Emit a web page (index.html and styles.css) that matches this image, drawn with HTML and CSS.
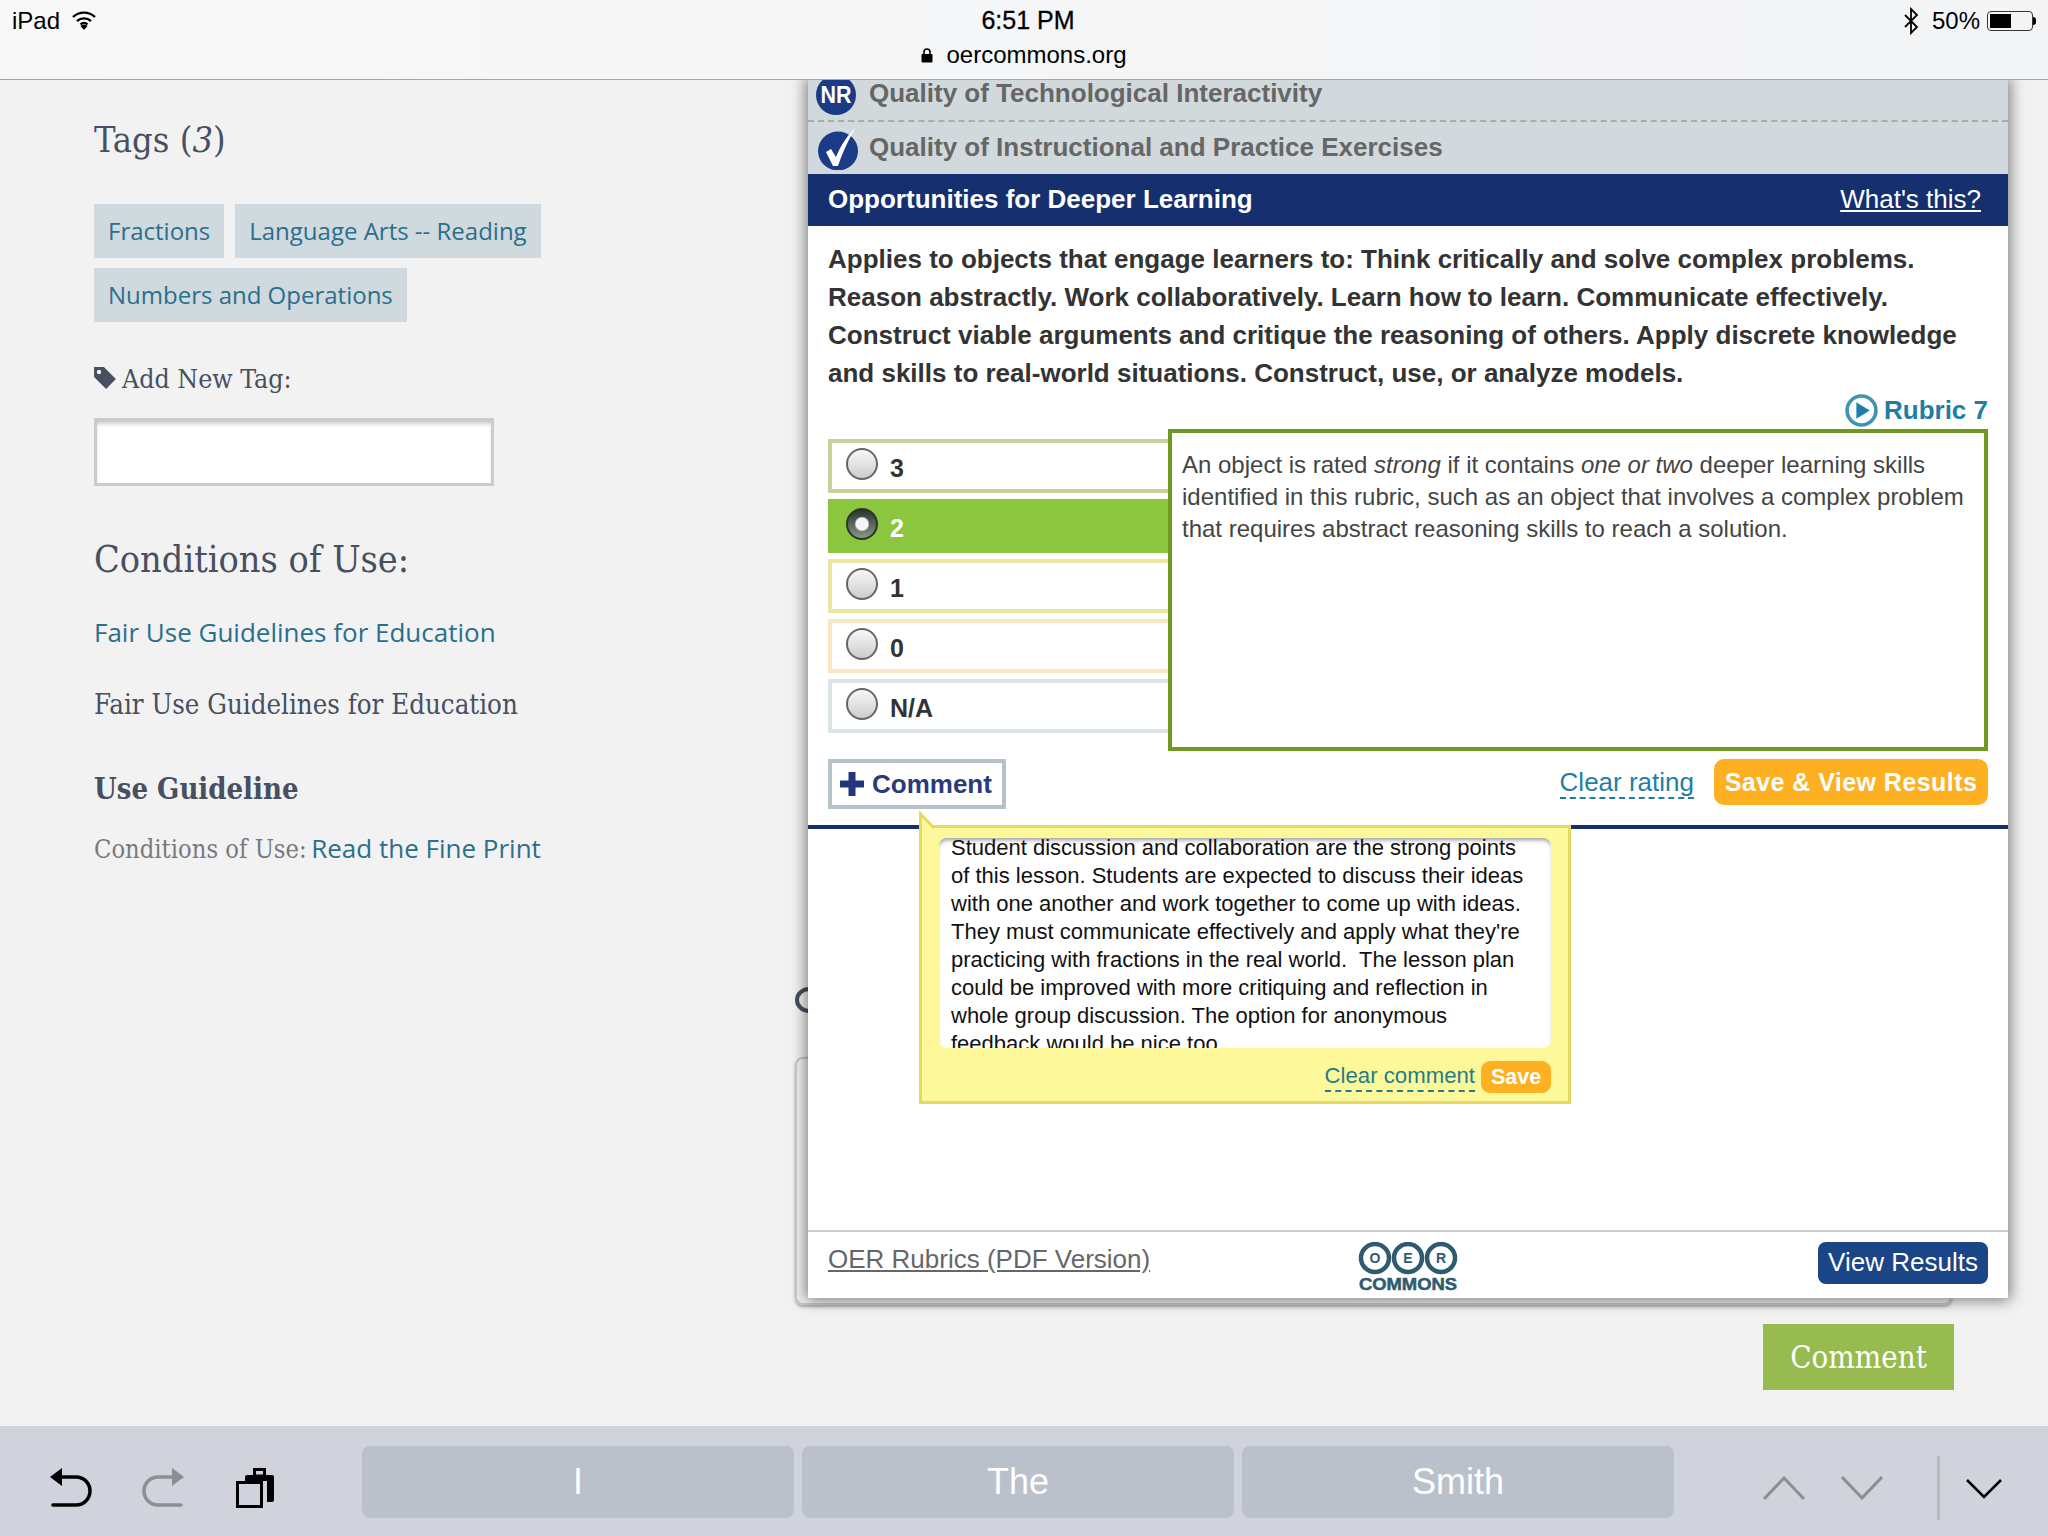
FILE: index.html
```html
<!DOCTYPE html>
<html lang="en">
<head>
<meta charset="utf-8">
<title>OER Commons</title>
<link rel="stylesheet" href="styles.css">
</head>
<body>
<div class="page">
  <header class="topbar">
    <div class="status-left">
      <span>iPad</span>
      <svg class="wifi" viewBox="0 0 24 20"><path d="M1 7a16 16 0 0 1 22 0M5 11a10.500 10.500 0 0 1 14 0M8.500 14.500a5 5 0 0 1 7 0" fill="none" stroke="#000" stroke-width="2.400"/><path d="M12 20l-3.500-4a5 5 0 0 1 7 0z"/></svg>
    </div>
    <div class="status-center">
      <div class="time">6:51 PM</div>
      <div class="url"><svg class="lock" viewBox="0 0 12 16"><path d="M3 7V5a3 3 0 0 1 6 0v2" fill="none" stroke="#000" stroke-width="1.600"/><rect x="0.500" y="7" width="11" height="8.500" rx="1"/></svg>oercommons.org</div>
    </div>
    <div class="status-right">
      <svg class="bt" viewBox="0 0 16 28"><path d="M2 8l12 12-6 6V2l6 6L2 20" fill="none" stroke="#000" stroke-width="1.800"/></svg>
      <span>50%</span>
      <span class="battery"><span class="battery-fill"></span></span>
      <span class="battery-tip"></span>
    </div>
  </header>

  <main class="main">
    <section class="side">
      <h2 class="side-title tags-title">Tags (<em>3</em>)</h2>
      <div class="chips">
        <a class="chip">Fractions</a>
        <a class="chip">Language Arts -- Reading</a>
        <a class="chip">Numbers and Operations</a>
      </div>
      <label class="add-tag"><svg class="tag-icon" viewBox="0 0 22 22"><path d="M1 1h9l11 11-9 9L1 10z" fill="#474f60"/><circle cx="5.500" cy="5.500" r="2" fill="#f2f2f3"/></svg>Add New Tag:</label>
      <div class="tag-input"></div>
      <h2 class="side-title conditions">Conditions of Use:</h2>
      <a class="side-link">Fair Use Guidelines for Education</a>
      <p class="side-text">Fair Use Guidelines for Education</p>
      <h3 class="guideline">Use Guideline</h3>
      <p class="fine"><span class="fine-label">Conditions of Use:</span> <a class="fine-link">Read the Fine Print</a></p>
    </section>
    <section class="behind">
      <div class="ring"></div>
      <div class="card"></div>
      <button class="comment-green">Comment</button>
    </section>

    <div class="panel">
      <div class="q-row q-first">
        <svg class="badge badge-nr" viewBox="0 0 40 40"><circle cx="20" cy="20" r="20" fill="#1b3b86"/><text x="20" y="28" text-anchor="middle" class="badge-text" textLength="31" lengthAdjust="spacingAndGlyphs">NR</text></svg>
        <span>Quality of Technological Interactivity</span>
      </div>
      <div class="q-row q-second">
        <svg class="badge badge-ok" viewBox="0 0 40 44"><ellipse cx="20" cy="25" rx="20" ry="19.500" fill="#1b3b86"/><path d="M8 26l5-3 5 8C23 19 29 10 38 1 32 11 25 25 20 40h-5z" fill="#fff"/></svg>
        <span>Quality of Instructional and Practice Exercises</span>
      </div>
      <div class="p-head">
        <strong>Opportunities for Deeper Learning</strong>
        <a class="whats">What's this?</a>
      </div>
      <div class="p-body">
        <p class="lead">Applies to objects that engage learners to: Think critically and solve complex problems. Reason abstractly. Work collaboratively. Learn how to learn. Communicate effectively. Construct viable arguments and critique the reasoning of others. Apply discrete knowledge and skills to real-world situations. Construct, use, or analyze models.</p>
        <div class="rubric-line">
          <svg class="play" viewBox="0 0 32 32"><circle cx="16" cy="16" r="14" fill="#fff" stroke="#3f93b3" stroke-width="3.500"/><path d="M11 8l13 8-13 8z" fill="#1f7ea5"/></svg>
          <span>Rubric 7</span>
        </div>
        <div class="rating">
          <div class="options">
            <div class="opt opt-3"><span class="radio"></span><b>3</b></div>
            <div class="opt opt-2"><span class="radio radio-on"></span><b>2</b></div>
            <div class="opt opt-1"><span class="radio"></span><b>1</b></div>
            <div class="opt opt-0"><span class="radio"></span><b>0</b></div>
            <div class="opt opt-na"><span class="radio"></span><b>N/A</b></div>
          </div>
          <div class="desc">An object is rated <em>strong</em> if it contains <em>one or two</em> deeper learning skills identified in this rubric, such as an object that involves a complex problem that requires abstract reasoning skills to reach a solution.</div>
        </div>
        <div class="actions">
          <button class="add-comment"><svg class="plus" viewBox="0 0 24 24"><path d="M8.500 0h7v8.500H24v7h-8.500V24h-7v-8.500H0v-7h8.500z" fill="#24367c"/></svg>Comment</button>
          <a class="clear-rating">Clear rating</a>
          <button class="save-view">Save &amp; View Results</button>
        </div>
      </div>
      <div class="p-rule"></div>
      <div class="p-space"></div>
      <footer class="p-foot">
        <a class="pdf">OER Rubrics (PDF Version)</a>
        <svg class="logo" viewBox="0 0 100 50">
          <g fill="#fff" stroke="#2f5b70" stroke-width="4.500">
            <circle cx="17" cy="16" r="14"/><circle cx="50" cy="16" r="14"/><circle cx="83" cy="16" r="14"/>
          </g>
          <text x="17" y="21" class="logo-letter">O</text><text x="50" y="21" class="logo-letter">E</text><text x="83" y="21" class="logo-letter">R</text>
          <text x="50" y="48" class="logo-word" textLength="98" lengthAdjust="spacingAndGlyphs">COMMONS</text>
        </svg>
        <button class="view-results">View Results</button>
      </footer>

      <div class="pop">
        <svg class="pop-tail" viewBox="0 0 24 18"><path d="M1.500 18V2L15 16" fill="#fdf99b" stroke="#e6d860" stroke-width="3"/></svg>
        <div class="pop-text"><div class="pop-inner">Student discussion and collaboration are the strong points of this lesson. Students are expected to discuss their ideas with one another and work together to come up with ideas. They must communicate effectively and apply what they're practicing with fractions in the real world.&nbsp; The lesson plan could be improved with more critiquing and reflection in whole group discussion. The option for anonymous feedback would be nice too.</div></div>
        <div class="pop-actions">
          <a class="clear-comment">Clear comment</a>
          <button class="pop-save">Save</button>
        </div>
      </div>
    </div>
  </main>

  <footer class="kbd">
    <svg class="k-undo" viewBox="0 0 44 40"><path d="M0 9L12 0v18z"/><path d="M10 9h16a14 14 0 0 1 0 28H3" fill="none" stroke="#000" stroke-width="3.500" stroke-linecap="round"/></svg>
    <svg class="k-redo" viewBox="0 0 44 40"><path d="M43 9L31 0v18z" fill="#8b8e93"/><path d="M33 9H17a14 14 0 0 0 0 28h23" fill="none" stroke="#8b8e93" stroke-width="3.500" stroke-linecap="round"/></svg>
    <svg class="k-clip" viewBox="0 0 38 40"><path d="M9 13V9a2 2 0 0 1 2-2h6V0h13v7h6a2 2 0 0 1 2 2v23a2 2 0 0 1-2 2h-5V13z"/><rect x="1.500" y="14.500" width="24" height="24" fill="none" stroke="#000" stroke-width="3"/><rect x="20" y="3" width="7" height="3.500" fill="#d0d3db"/></svg>
    <div class="k-sugg">
      <span class="k-chip">I</span>
      <span class="k-chip">The</span>
      <span class="k-chip">Smith</span>
    </div>
    <svg class="k-chev k-up" viewBox="0 0 42 24"><path d="M1 23L21 2l20 21" fill="none" stroke="#8b8e93" stroke-width="3"/></svg>
    <svg class="k-chev k-down" viewBox="0 0 42 24"><path d="M1 1l20 21L41 1" fill="none" stroke="#8b8e93" stroke-width="3"/></svg>
    <span class="k-divider"></span>
    <svg class="k-hide" viewBox="0 0 36 20"><path d="M1 1l17 17L35 1" fill="none" stroke="#000" stroke-width="2.600"/></svg>
  </footer>
</div>
</body>
</html>
```
FILE: styles.css
```css
* { box-sizing: border-box; }
html, body { margin: 0; padding: 0; }
body { font-family: "Liberation Sans", Arial, sans-serif; background: #f2f2f3; color: #000; }
button { font-family: inherit; border: 0; padding: 0; cursor: pointer; }
p, h2, h3 { margin: 0; font-weight: normal; }

.page { width: 2048px; height: 1536px; display: flex; flex-direction: column; overflow: hidden; }

/* status bar */
.topbar { position: relative; z-index: 5; flex: 0 0 80px; display: grid; grid-template-columns: 1fr auto 1fr; background: linear-gradient(90deg, #f8f8f8, #f3f4f6); border-bottom: 1px solid #a5a5a5; font-size: 24px; }
.status-left { display: flex; align-items: flex-start; gap: 12px; padding: 7px 0 0 12px; line-height: 28px; }
.wifi { width: 24px; height: 20px; margin-top: 3px; }
.status-center { text-align: center; width: 220px; margin-left: 8px; }
.time { font-size: 25px; line-height: 28px; padding-top: 6px; -webkit-text-stroke: 0.300px #000; }
.url { display: flex; align-items: center; justify-content: center; gap: 13px; line-height: 28px; margin-top: 7px; padding-right: 8px; }
.lock { width: 12px; height: 16px; }
.status-right { display: flex; align-items: flex-start; justify-content: flex-end; padding: 7px 12px 0 0; line-height: 28px; }
.bt { width: 16px; height: 28px; margin-right: 13px; }
.battery { width: 46px; height: 20px; margin: 4px 0 0 7px; border: 1.500px solid #333; border-radius: 4px; padding: 2px; }
.battery-fill { display: block; width: 21px; height: 100%; background: #000; }
.battery-tip { width: 3px; height: 8px; margin-top: 10px; background: #000; border-radius: 0 3px 3px 0; }

/* main */
.main { position: relative; flex: 1; display: flex; min-height: 0; }
.side { flex: 0 0 795px; padding: 38px 0 0 94px; font-family: "DejaVu Serif", serif; font-stretch: condensed; color: #474f60; }
.side-title { font-size: 37.500px; line-height: 44px; color: #474f60; }
.tags-title { font-size: 36px; }
.side-title em { font-style: italic; }
.chips { display: flex; flex-wrap: wrap; gap: 10px 11px; width: 460px; margin-top: 42px; }
.chip { height: 54px; padding: 0 14px 2px; display: flex; align-items: center; background: #cfd9de; color: #2a6f8c; font-family: "Open Sans", sans-serif; font-stretch: normal; font-size: 24px; }
.add-tag { display: flex; align-items: center; gap: 5px; height: 36px; margin-top: 38px; font-size: 26.500px; }
.tag-icon { width: 24px; height: 24px; margin-left: -1px; }
.tag-input { width: 400px; height: 68px; margin-top: 22px; background: #fff; border: 3px solid #ccc; box-shadow: inset 0 4px 5px -2px #bbb; }
.conditions { margin-top: 51px; }
.side-link { display: block; height: 36px; line-height: 36px; margin-top: 33px; color: #2a6f8c; font-family: "Open Sans", sans-serif; font-stretch: normal; font-size: 26px; }
.side-text { line-height: 36px; margin-top: 37px; font-size: 27.400px; }
.guideline { line-height: 36px; margin-top: 48px; font-size: 29px; font-weight: bold; }
.fine { line-height: 36px; margin-top: 23px; }
.fine-label { font-size: 25.300px; color: #77797f; }
.fine-link { color: #2a6f8c; font-family: "Open Sans", sans-serif; font-stretch: normal; font-size: 26px; }

.behind { flex: 0 0 1159px; display: flex; flex-direction: column; align-items: flex-end; padding-top: 907px; }
.ring { align-self: flex-start; width: 28px; height: 26px; border: 4px solid #474f60; border-radius: 50%; }
.card { align-self: flex-start; width: 1157px; height: 248px; margin-top: 44px; border: 2px solid #c8c8c8; border-radius: 8px; box-shadow: 0 2px 3px rgba(0,0,0,.3); }
.comment-green { width: 191px; height: 66px; margin-top: 19px; background: #97bb4f; color: #fff; font-family: "DejaVu Serif", serif; font-stretch: condensed; font-size: 31px; }

/* rubric panel */
.panel { position: absolute; left: 808px; top: -1px; width: 1200px; height: 1219px; display: flex; flex-direction: column; background: #fff; box-shadow: 0 0 14px 2px rgba(0,0,0,.5); }
.q-row { display: flex; align-items: center; background: #d2d9dc; color: #666; font-weight: bold; font-size: 26px; }
.q-first { height: 43px; border-bottom: 2px dashed #a9adb0; padding: 0 0 12px 8px; }
.q-second { height: 52px; padding: 0 0 2px 10px; }
.badge { flex: none; }
.badge-nr { width: 40px; height: 40px; margin: 3px 13px 0 0; }
.badge-text { fill: #fff; font-family: "Liberation Sans", sans-serif; font-weight: bold; font-size: 24px; }
.badge-ok { width: 40px; height: 44px; margin: 2px 11px 0 0; }
.p-head { height: 52px; flex: none; display: flex; align-items: center; justify-content: space-between; padding: 0 27px 2px 20px; background: #162f6e; color: #fff; font-size: 26px; }
.whats { color: #fff; text-decoration: underline; }
.p-body { flex: none; height: 599px; padding: 14px 20px 0; }
.lead { font-size: 26px; font-weight: bold; line-height: 38px; color: #333; }
.rubric-line { display: flex; justify-content: flex-end; align-items: center; gap: 6px; height: 30px; margin-top: 3px; color: #1f7ea5; font-size: 26px; font-weight: bold; }
.play { width: 33px; height: 33px; }
.rating { display: flex; height: 322px; margin-top: 4px; }
.options { flex: 0 0 340px; display: flex; flex-direction: column; gap: 6px; padding-top: 10px; }
.opt { height: 54px; display: flex; border: 4px solid; border-right: 0; padding: 5px 0 0 14px; background: #fff; color: #333; font-size: 25px; }
.opt b { margin: 6px 0 0 12px; line-height: 28px; }
.opt-3 { border-color: #c5d39a; }
.opt-2 { background: #8cc63f; border-color: #8cc63f; color: #fff; }
.opt-1 { border-color: #e9e6a8; }
.opt-0 { border-color: #f8e6c5; }
.opt-na { border-color: #dde4e6; }
.radio { width: 32px; height: 32px; border-radius: 50%; border: 2px solid #666; background: linear-gradient(#f8f8f8, #ccc); }
.radio-on { border-color: #2c332c; background: radial-gradient(circle at center, #f5f5f5 6px, transparent 7.500px), linear-gradient(#2c352c, #8a958a); }
.desc { flex: 1; border: 4px solid #6f9a1f; padding: 16px 10px 0 10px; font-size: 24px; line-height: 32px; color: #444; background: #fff; }
.desc em { font-style: italic; }
.actions { display: flex; align-items: flex-start; margin-top: 8px; }
.add-comment { width: 178px; height: 50px; display: flex; align-items: center; gap: 8px; padding-left: 8px; background: #fff; border: 4px solid #b5c3c9; color: #2b3a7a; font-size: 26px; font-weight: bold; }
.plus { width: 24px; height: 24px; }
.clear-rating { margin: 7px 20px 0 auto; height: 33px; line-height: 32px; color: #1f7ea5; font-size: 26px; border-bottom: 2px dashed #1f7ea5; }
.save-view { width: 274px; height: 46px; border-radius: 10px; background: #fdb022; color: #fff; font-size: 25px; font-weight: bold; letter-spacing: .45px; }
.p-rule { flex: none; height: 4px; background: #162f6e; }
.p-space { flex: 1; }
.p-foot { flex: none; height: 68px; display: grid; grid-template-columns: 530px 1fr auto; align-items: start; padding: 10px 20px 0; border-top: 2px solid #ccc; }
.pdf { color: #666; font-size: 26px; line-height: 34px; text-decoration: underline; }
.logo { width: 100px; height: 50px; }
.logo-letter { text-anchor: middle; fill: #2f5b70; font-family: "Liberation Sans", sans-serif; font-weight: bold; font-size: 14px; }
.logo-word { text-anchor: middle; fill: #2f5b70; stroke: #2f5b70; stroke-width: .5px; font-family: "Liberation Sans", sans-serif; font-weight: bold; font-size: 16px; }
.view-results { width: 170px; height: 42px; padding-bottom: 2px; border-radius: 8px; background: #1a4587; color: #fff; font-size: 26px; }

/* comment popover */
.pop { position: absolute; left: 111px; top: 746px; width: 652px; height: 279px; padding: 10px 17px 0; background: #fdf99b; border: 3px solid #e6d860; }
.pop-tail { position: absolute; left: -3px; top: -16px; width: 24px; height: 18px; overflow: visible; }
.pop-text { height: 210px; overflow: hidden; padding: 0 12px; border-radius: 8px; background: #fff; box-shadow: inset 0 4px 4px -2px #999; color: #111; font-size: 22px; line-height: 28px; }
.pop-inner { margin-top: -4px; }
.pop-actions { display: flex; justify-content: flex-end; align-items: flex-start; gap: 6px; margin-top: 13px; }
.clear-comment { height: 30px; margin-top: 1px; line-height: 28px; color: #1f7e86; font-size: 22.200px; border-bottom: 2px dashed #1f7e86; }
.pop-save { width: 70px; height: 32px; border-radius: 9px; background: #fdb022; color: #fff; font-size: 21.500px; font-weight: bold; }

/* keyboard bar */
.kbd { flex: 0 0 110px; position: relative; z-index: 5; display: flex; align-items: flex-start; background: #d0d3db; }
.k-undo { width: 44px; height: 40px; margin: 42px 0 0 50px; }
.k-redo { width: 44px; height: 40px; margin: 42px 0 0 47px; }
.k-clip { width: 38px; height: 40px; margin: 42px 0 0 51px; }
.k-sugg { display: flex; gap: 8px; margin: 20px 0 0 88px; }
.k-chip { width: 432px; height: 72px; display: flex; align-items: center; justify-content: center; border-radius: 8px; background: #bac1ca; color: #fff; font-size: 36px; }
.k-chev { width: 42px; height: 24px; margin-top: 50px; }
.k-up { margin-left: 89px; }
.k-down { margin-left: 36px; }
.k-divider { width: 3px; height: 64px; margin: 30px 0 0 54px; background: #b6b9c0; }
.k-hide { width: 36px; height: 20px; margin: 53px 0 0 26px; }
```
